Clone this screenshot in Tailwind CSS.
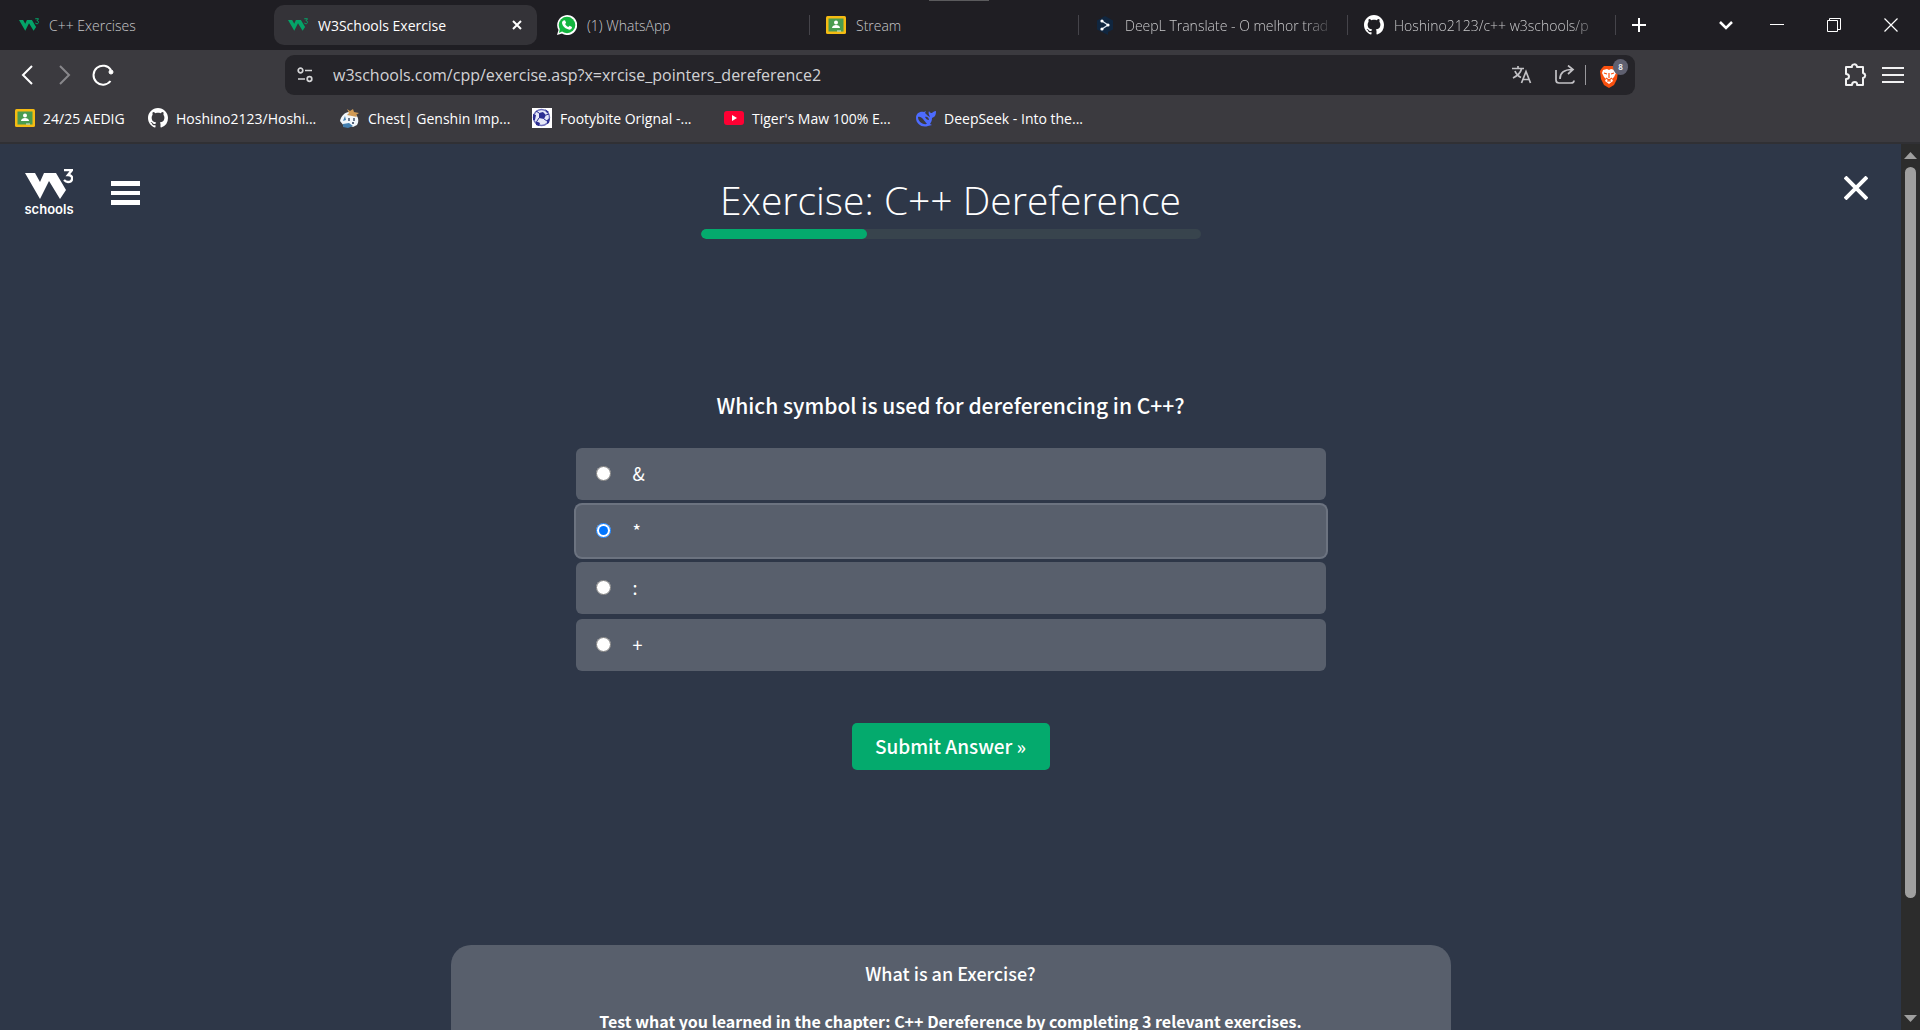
<!DOCTYPE html>
<html lang="en">
<head>
<meta charset="utf-8">
<title>W3Schools Exercise</title>
<script src="https://cdn.jsdelivr.net/npm/@tailwindcss/browser@4"></script>
</head>
<body class="flex h-screen flex-col overflow-hidden bg-[#2e3748] font-['Open_Sans',sans-serif] text-white">

<svg class="hidden">
  <symbol id="w3" viewBox="0 0 48 32"><path d="M0 4h10l5 9 4-9h12l10 17-6 9-11-18-9 18z"/><path d="M39 1h8l-4 5c6 0 5 7 0 7-2 0-3-1-4-2" fill="none" stroke="currentColor" stroke-width="2.4"/></symbol>
  <symbol id="github" viewBox="0 0 16 16"><path d="M8 0C3.58 0 0 3.58 0 8c0 3.54 2.29 6.53 5.47 7.59.4.07.55-.17.55-.38 0-.19-.01-.82-.01-1.49-2.01.37-2.53-.49-2.69-.94-.09-.23-.48-.94-.82-1.13-.28-.15-.68-.52-.01-.53.63-.01 1.08.58 1.23.82.72 1.21 1.87.87 2.33.66.07-.52.28-.87.51-1.07-1.78-.2-3.64-.89-3.64-3.95 0-.87.31-1.59.82-2.15-.08-.2-.36-1.02.08-2.12 0 0 .67-.21 2.2.82.64-.18 1.32-.27 2-.27s1.36.09 2 .27c1.53-1.04 2.2-.82 2.2-.82.44 1.1.16 1.92.08 2.12.51.56.82 1.27.82 2.15 0 3.07-1.87 3.75-3.65 3.95.29.25.54.73.54 1.48 0 1.07-.01 1.93-.01 2.2 0 .21.15.46.55.38A8.01 8.01 0 0 0 16 8c0-4.42-3.58-8-8-8z"/></symbol>
  <symbol id="classroom" viewBox="0 0 20 20"><rect y="1" width="20" height="18" rx="1.5" fill="#f5bb12"/><rect x="2.500" y="3.500" width="15" height="13" fill="#4a9c50"/><circle cx="10" cy="7.500" r="2" fill="#fff"/><path d="M6 13c0-4 8-4 8 0z" fill="#fff"/><path d="M11 15.500h4v1h-4z" fill="#d8e8d8"/></symbol>
</svg>

<header class="shrink-0">
  <div class="relative flex h-[50px] items-center bg-[#1f1e23] pl-[5px] text-[14px] font-light text-[#c9c9cb]">
    <div class="absolute top-0 left-[929px] h-px w-[60px] bg-[#5b5b5d]"></div>
    <nav class="flex min-w-0 flex-1 gap-[6px]" aria-label="Tabs">
      <a href="#" class="flex h-10 min-w-0 max-w-[263px] flex-1 items-center gap-[10px] pl-[14px]"><svg class="h-[14px] w-5 shrink-0 fill-current text-[#04a468]"><use href="#w3"/></svg><span class="whitespace-nowrap">C++ Exercises</span></a>
      <a href="#" class="flex h-10 min-w-0 max-w-[263px] flex-1 items-center gap-[10px] rounded-[10px] bg-[#343338] pl-[14px] font-normal text-white"><svg class="h-[14px] w-5 shrink-0 fill-current text-[#04a468]"><use href="#w3"/></svg><span class="flex-1 whitespace-nowrap">W3Schools Exercise</span><svg class="mr-[15px] size-[10px] shrink-0" viewBox="0 0 10 10" stroke="#fff" stroke-width="2"><path d="M1 1l8 8M9 1l-8 8"/></svg></a>
      <a href="#" class="flex h-10 min-w-0 max-w-[263px] flex-1 items-center gap-[10px] pl-[14px]"><svg class="size-5 shrink-0" viewBox="0 0 20 20"><path d="M0 20l1.500-5A10 10 0 1 1 5 18.600z" fill="#fff"/><circle cx="10" cy="10" r="8.300" fill="#14b53f"/><path d="M2 18l1-5 3 3z" fill="#14b53f"/><path d="M6.500 5.500l1.500-.2 1.100 2.500-1 1.200c.8 1.500 1.700 2.300 3.200 3l1.300-1.300 2.400 1.200c0 2-1.700 3-3.300 2.700-3.500-.8-6.200-3.500-6.700-6.500 0-1 .6-2.100 1.500-2.600z" fill="#fff"/></svg><span class="whitespace-nowrap">(1) WhatsApp</span></a>
      <div class="-mx-[3px] flex max-w-[269px] min-w-0 flex-1 items-center"><i class="h-5 w-px shrink-0 bg-[#45444a]"></i><a href="#" class="flex h-10 min-w-0 flex-1 items-center gap-[10px] pl-[16px]"><svg class="size-5 shrink-0"><use href="#classroom"/></svg><span class="whitespace-nowrap">Stream</span></a></div>
      <div class="-mx-[3px] flex max-w-[269px] min-w-0 flex-1 items-center"><i class="h-5 w-px shrink-0 bg-[#45444a]"></i><a href="#" class="flex h-10 min-w-0 flex-1 items-center gap-[10px] pr-[12px] pl-[16px]"><svg class="size-5 shrink-0" viewBox="0 0 20 20"><path d="M10 1l8 4.500v9L13 17v3l-4-2-7-3.500v-9z" fill="#10263f"/><path d="M7 6l6 4-6 4" fill="none" stroke="#dce8f5" stroke-width="1.300"/><g fill="#fff"><circle cx="7" cy="6" r="1.600"/><circle cx="13" cy="10" r="1.600"/><circle cx="7" cy="14" r="1.600"/></g></svg><span class="min-w-0 flex-1 overflow-hidden whitespace-nowrap mask-r-from-85%">DeepL Translate - O melhor trad</span></a></div>
      <div class="-mx-[3px] flex max-w-[269px] min-w-0 flex-1 items-center"><i class="h-5 w-px shrink-0 bg-[#45444a]"></i><a href="#" class="flex h-10 min-w-0 flex-1 items-center gap-[10px] pr-[12px] pl-[16px]"><svg class="size-5 shrink-0 fill-white"><use href="#github"/></svg><span class="min-w-0 flex-1 overflow-hidden whitespace-nowrap mask-r-from-85%">Hoshino2123/c++ w3schools/p</span></a><i class="h-5 w-px shrink-0 bg-[#45444a]"></i></div>
      <button aria-label="New tab" class="ml-[13px] shrink-0"><svg class="size-[14px]" viewBox="0 0 14 14" stroke="#fff" stroke-width="2"><path d="M7 0v14M0 7h14"/></svg></button>
    </nav>
    <div class="flex shrink-0 items-center gap-[43px] pr-[22px]">
      <button aria-label="Search tabs"><svg class="size-[14px]" viewBox="0 0 14 14" fill="none" stroke="#fff" stroke-width="2.500"><path d="M1 4l6 6 6-6"/></svg></button>
      <button aria-label="Minimize" class="-ml-[6px] h-[14px]"><svg class="size-[14px]" viewBox="0 0 14 14" stroke="#fff"><path d="M0 6.500h14"/></svg></button>
      <button aria-label="Restore"><svg class="size-[14px]" viewBox="0 0 14 14" fill="none" stroke="#fff"><path d="M.5 2.500h10v11H.5zM2.500 2.500v-2h11v11h-3"/></svg></button>
      <button aria-label="Close window"><svg class="size-[14px]" viewBox="0 0 14 14" stroke="#fff" stroke-width="1.200"><path d="M.5.500l13 13M13.500.500l-13 13"/></svg></button>
    </div>
  </div>

  <div class="bg-[#3b3a3f]">
    <div class="flex h-[50px] items-center pr-4 pl-[20px]">
      <div class="flex w-[265px] shrink-0 items-center">
        <button aria-label="Back"><svg class="h-5 w-[14px]" viewBox="0 0 14 20" fill="none" stroke="#fff" stroke-width="2"><path d="M12 1L3 10l9 9"/></svg></button>
        <button aria-label="Forward" class="ml-6"><svg class="h-5 w-[14px]" viewBox="0 0 14 20" fill="none" stroke="#88878b" stroke-width="2"><path d="M2 1l9 9-9 9"/></svg></button>
        <button aria-label="Reload" class="ml-5"><svg class="size-[22px]" viewBox="0 0 22 22" fill="none" stroke="#fff" stroke-width="2"><path d="M18.500 17A9.500 9.500 0 1 1 19 6"/><circle cx="19" cy="8" r="2" fill="#fff" stroke-width="1"/></svg></button>
      </div>
      <div class="flex h-10 min-w-0 max-w-[1350px] flex-1 items-center rounded-[9px] bg-[#252429] pr-[7px] pl-[12px]">
        <svg class="size-4 shrink-0" viewBox="0 0 16 16" fill="none" stroke="#d5d5d7" stroke-width="1.700"><circle cx="3.500" cy="3.500" r="2.300"/><path d="M8 3.500h7M1 12h7"/><circle cx="12.500" cy="12" r="2.300"/></svg>
        <div class="ml-5 min-w-0 flex-1">
          <input aria-label="Address" value="w3schools.com/cpp/exercise.asp?x=xrcise_pointers_dereference2" class="w-full bg-transparent text-[16px] font-normal text-[#d2d2d5] outline-none">
        </div>
        <button aria-label="Translate"><svg class="size-5" viewBox="0 0 20 20" fill="none" stroke="#c2c1c5" stroke-width="1.700"><path d="M0 3.500h12M6 1v2.500M9.500 4C8.500 8 5 11 1 13M3 6c1 3 3 5 6 6.500M9.500 18L14 6.500 18.500 18M11 14.500h6"/></svg></button>
        <button aria-label="Share" class="ml-[23px]"><svg class="size-5" viewBox="0 0 20 20" fill="none" stroke="#c2c1c5" stroke-width="1.700"><path d="M1 5v10q0 3 3 3h12q3 0 3-2.500M5 14C5 8 9 4.500 17 4.500M13 .5l5 4-5 4.500"/></svg></button>
        <i class="mx-[10px] h-5 w-px bg-[#99989c]"></i>
        <button aria-label="Brave Shields" class="relative h-8 w-[32px]"><svg class="mt-1 ml-[3px] h-[24px] w-5" viewBox="0 0 20 24"><path d="M5 1h10l2 2 2 3-1 8-3 6-5 3-5-3-3-6-1-8 2-3z" fill="#f9500f"/><path d="M4 5l4-1 2 1 2-1 4 1 1 3-2 4-2 2 1 2-4 3-4-3 1-2-2-2-2-4z" fill="#fff"/><path d="M5 8l3 1M15 8l-3 1M10 8v5M7 13l3 2 3-2M8 16h4" stroke="#f9500f" stroke-width="1.200" fill="none"/></svg><span class="absolute top-0 right-0 flex h-4 w-[15px] items-center justify-center rounded-full bg-[#5f6070] text-[8px] font-semibold">8</span></button>
      </div>
      <div class="ml-auto flex items-center gap-[15px]">
        <button aria-label="Extensions"><svg class="size-6" viewBox="0 0 24 24" fill="none" stroke="#f1f1f2" stroke-width="2" stroke-linejoin="round"><path d="M3 4h6c-1-3 5-4 5 0h6v6c3 1 3 4 0 5v7h-6c1-4-5-4-5 0H3v-6c4 0 4-5 0-5z"/></svg></button>
        <button aria-label="Menu"><svg class="size-[22px]" viewBox="0 0 22 22" stroke="#f1f1f2" stroke-width="2"><path d="M0 4h22M0 11h22M0 18h22"/></svg></button>
      </div>
    </div>
    <nav class="flex h-[44px] items-center gap-5 overflow-hidden border-b-2 border-[#303034] pb-[6px] pl-[15px] text-[14px] whitespace-nowrap" aria-label="Bookmarks">
      <a href="#" class="flex min-w-[113px] items-center gap-2"><svg class="size-5"><use href="#classroom"/></svg>24/25 AEDIG</a>
      <a href="#" class="flex min-w-[172px] items-center gap-2"><svg class="size-5 fill-white"><use href="#github"/></svg>Hoshino2123/Hoshi...</a>
      <a href="#" class="flex min-w-[172px] items-center gap-2"><svg class="size-5" viewBox="0 0 20 20"><path d="M0 13c1-5 5-9 9-9l6 2c4 3 4 8 2 11l-4 2-5-2-4 1z" fill="#f1f6fa"/><path d="M7 1l3 2 3-2 1 3 5 1-3 2 1 2-5-1-5-1 2-2z" fill="#cf9a55"/><path d="M3 16l6-1 4 3-5 2-5-1zM5 8l1 4-3 1z" fill="#437eae"/><path d="M9 10v3M14 10v3M12 15l2 0" stroke="#223552" stroke-width="1.300"/></svg>Chest| Genshin Imp...</a>
      <a href="#" class="flex min-w-[172px] items-center gap-2"><svg class="size-5" viewBox="0 0 20 20"><path d="M0 0h20v20H0z" fill="#fff"/><circle cx="9.500" cy="9.500" r="8" fill="#e6e8f9" stroke="#6a6cb8" stroke-width="1.500"/><path d="M7 5l4-1 3 3-2 4-5-1zM1 6l3 1-1 5-2 0zM15 12l3-2-1 5-2 1zM4 13l4 2-1 3-3-1zM13 1l4 3-2 1z" fill="#2c2e92"/><path d="M12 11l3 2M14 7l3-1M7 10l-2 3M7 5L4 3" stroke="#2c2e92"/></svg>Footybite Orignal -...</a>
      <a href="#" class="flex min-w-[172px] items-center gap-2"><svg class="size-5" viewBox="0 0 20 20"><rect y="3" width="20" height="14" rx="3" fill="#ff0033"/><path d="M8 7l5 3-5 3z" fill="#fff"/></svg>Tiger's Maw 100% E...</a>
      <a href="#" class="flex min-w-[172px] items-center gap-2"><svg class="size-5" viewBox="0 0 20 20"><path d="M0 10c0-5 4-7 8-6l2-1-1 2c2 2 3 3 5 4-1-2-2-4-1-6 1 2 2 2 3 2 1-1 2-2 4-2 0 4-1 6-4 7 0 3-1 4-2 6l2 1-4 1C6 20 0 16 0 10z" fill="#4d6bfe"/><path d="M2 9c4-1 6 4 9 7-5 1-9-3-9-7zM9 9c2-1 4 1 4 3-2 0-3-1-4-3z" fill="#3b3a3f"/></svg>DeepSeek - Into the...</a>
    </nav>
  </div>
</header>

<div class="flex min-h-0 flex-1">
  <main class="min-w-0 flex-1 overflow-hidden font-['Noto_Sans_CJK_SC','Open_Sans',sans-serif]">
    <div class="grid h-[104px] grid-cols-[1fr_500px_1fr]">
      <div class="flex items-start gap-[38px] pt-[25px] pl-[25px]">
        <a href="#" class="flex w-12 flex-col items-center"><svg class="h-8 w-12 fill-current"><use href="#w3"/></svg><span class="font-['Inter',sans-serif] text-[13px] leading-4 font-semibold">schools</span></a>
        <button aria-label="Menu" class="mt-3"><svg class="h-6 w-[29px] fill-white" viewBox="0 0 29 24"><path d="M0 0h29v5H0zM0 10h29v4H0zM0 19h29v5H0z"/></svg></button>
      </div>
      <div class="flex flex-col pt-[27px]">
        <h1 class="text-center font-['Open_Sans',sans-serif] text-[39px] leading-[58px] font-light whitespace-nowrap">Exercise: C++ Dereference</h1>
        <div role="progressbar" aria-label="Progress" aria-valuenow="33" aria-valuemin="0" aria-valuemax="100" class="h-[10px] overflow-hidden rounded-full bg-[#38444d]"><div class="h-full w-1/3 rounded-full bg-[#04aa6d]"></div></div>
      </div>
      <div class="flex items-start justify-end pt-[32px] pr-[33px]"><button aria-label="Close exercise"><svg class="size-6" viewBox="0 0 24 24" stroke="#fff" stroke-width="4"><path d="M1 1l22 22M23 1L1 23"/></svg></button></div>
    </div>

    <form class="mx-auto flex max-w-[750px] flex-col items-center pt-[140px]">
      <h2 class="text-[21px] leading-[34px] font-medium whitespace-nowrap">Which symbol is used for dereferencing in C++?</h2>
      <div class="mt-[26px] flex w-full flex-col gap-[5px] text-[18px] leading-[50px]">
        <label class="flex h-[52px] items-center gap-[22px] rounded-[6px] bg-[#585f6c] pb-[2px] pl-5"><input type="radio" name="answer" class="size-[15px] accent-[#0075ff]"><span>&amp;</span></label>
        <label class="flex h-[52px] items-center gap-[22px] rounded-[6px] bg-[#585f6c] pb-[2px] pl-5 ring-2 ring-[#6c7380]"><input type="radio" name="answer" checked class="size-[15px] accent-[#0075ff]"><span>*</span></label>
        <label class="flex h-[52px] items-center gap-[22px] rounded-[6px] bg-[#585f6c] pb-[2px] pl-5"><input type="radio" name="answer" class="size-[15px] accent-[#0075ff]"><span>:</span></label>
        <label class="flex h-[52px] items-center gap-[22px] rounded-[6px] bg-[#585f6c] pb-[2px] pl-5"><input type="radio" name="answer" class="size-[15px] accent-[#0075ff]"><span>+</span></label>
      </div>
      <button type="button" class="mt-[52px] h-[47px] w-[198px] rounded-[5px] bg-[#04aa6d] text-[19px] font-medium whitespace-nowrap">Submit Answer »</button>
    </form>

    <section class="mx-auto mt-[175px] flex max-w-[1000px] flex-col items-center gap-[20px] rounded-[20px] bg-[#585f6c] pt-[14px] pb-8 text-[16px] leading-7">
      <h3 class="text-[18px] font-medium">What is an Exercise?</h3>
      <p class="font-bold whitespace-nowrap">Test what you learned in the chapter: C++ Dereference by completing 3 relevant exercises.</p>
    </section>
  </main>

  <div aria-hidden="true" class="flex w-[19px] shrink-0 flex-col items-center bg-[#2c2c2c] py-[7px]">
    <svg class="h-[8px] w-[13px]" viewBox="0 0 13 8" fill="#9f9f9f"><path d="M0 8l6.500-7L13 8z"/></svg>
    <div class="my-2 w-full flex-1 px-1"><div class="h-[87%] rounded-full bg-[#9f9f9f]"></div></div>
    <svg class="h-[8px] w-[13px]" viewBox="0 0 13 8" fill="#9f9f9f"><path d="M0 0l6.500 7L13 0z"/></svg>
  </div>
</div>
</body>
</html>
